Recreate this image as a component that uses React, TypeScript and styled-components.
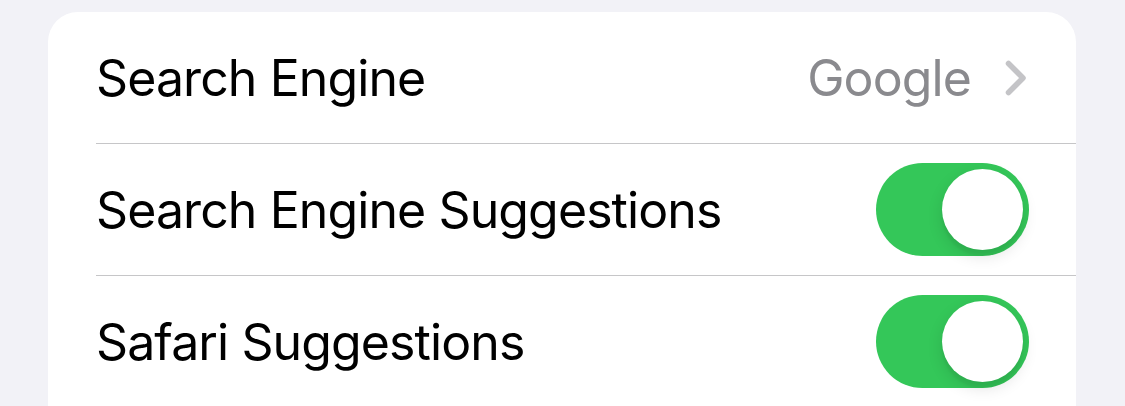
import React from 'react';
import styled, { createGlobalStyle } from 'styled-components';

const GlobalStyle = createGlobalStyle`
  html, body {
    margin: 0;
    padding: 0;
    background: #f2f2f7;
    overflow: hidden;
  }
`;

const Page = styled.div`
  padding: 12px 49px 0 48px;
  font-family: Inter, 'Liberation Sans', sans-serif;
`;

const Card = styled.div`
  background: #ffffff;
  border-radius: 30px 30px 0 0;
  overflow: hidden;
`;

const Row = styled.div`
  display: flex;
  align-items: center;
  margin-left: 48px;
  padding-right: ${(p: { $pad: number }) => p.$pad}px;
  height: 131px;
  border-bottom: 1px solid #c6c6c8;

  &:last-child {
    border-bottom: none;
  }
`;

const Label = styled.span`
  flex: 1;
  font-size: 50px;
  letter-spacing: -0.9px;
  color: #000000;
`;

const Value = styled.span`
  font-size: 50px;
  letter-spacing: -0.9px;
  color: #8a8a8e;
  margin-right: 34px;
`;

const Switch = styled.div<{ $on: boolean }>`
  position: relative;
  width: 153px;
  height: 93px;
  border-radius: 47px;
  background: ${(p) => (p.$on ? '#34c759' : '#e9e9eb')};
`;

const Knob = styled.div<{ $on: boolean }>`
  position: absolute;
  top: 6px;
  left: ${(p) => (p.$on ? '66px' : '6px')};
  width: 81px;
  height: 81px;
  border-radius: 50%;
  background: #ffffff;
  box-shadow: 0 6px 16px rgba(0, 0, 0, 0.12), 0 6px 2px rgba(0, 0, 0, 0.04);
`;

const Chevron = () => (
  <svg width="22" height="36" viewBox="0 0 22 36" fill="none">
    <path
      d="M3.5 3.5 L18 18 L3.5 32.5"
      stroke="#c4c4c7"
      strokeWidth="5.5"
      strokeLinecap="round"
      strokeLinejoin="round"
    />
  </svg>
);

const Toggle = ({ on }: { on: boolean }) => (
  <Switch $on={on}>
    <Knob $on={on} />
  </Switch>
);

export default function App() {
  return (
    <Page>
      <GlobalStyle />
      <Card>
        <Row $pad={49}>
          <Label>Search Engine</Label>
          <Value>Google</Value>
          <Chevron />
        </Row>
        <Row $pad={47}>
          <Label>Search Engine Suggestions</Label>
          <Toggle on />
        </Row>
        <Row $pad={47}>
          <Label>Safari Suggestions</Label>
          <Toggle on />
        </Row>
      </Card>
    </Page>
  );
}
